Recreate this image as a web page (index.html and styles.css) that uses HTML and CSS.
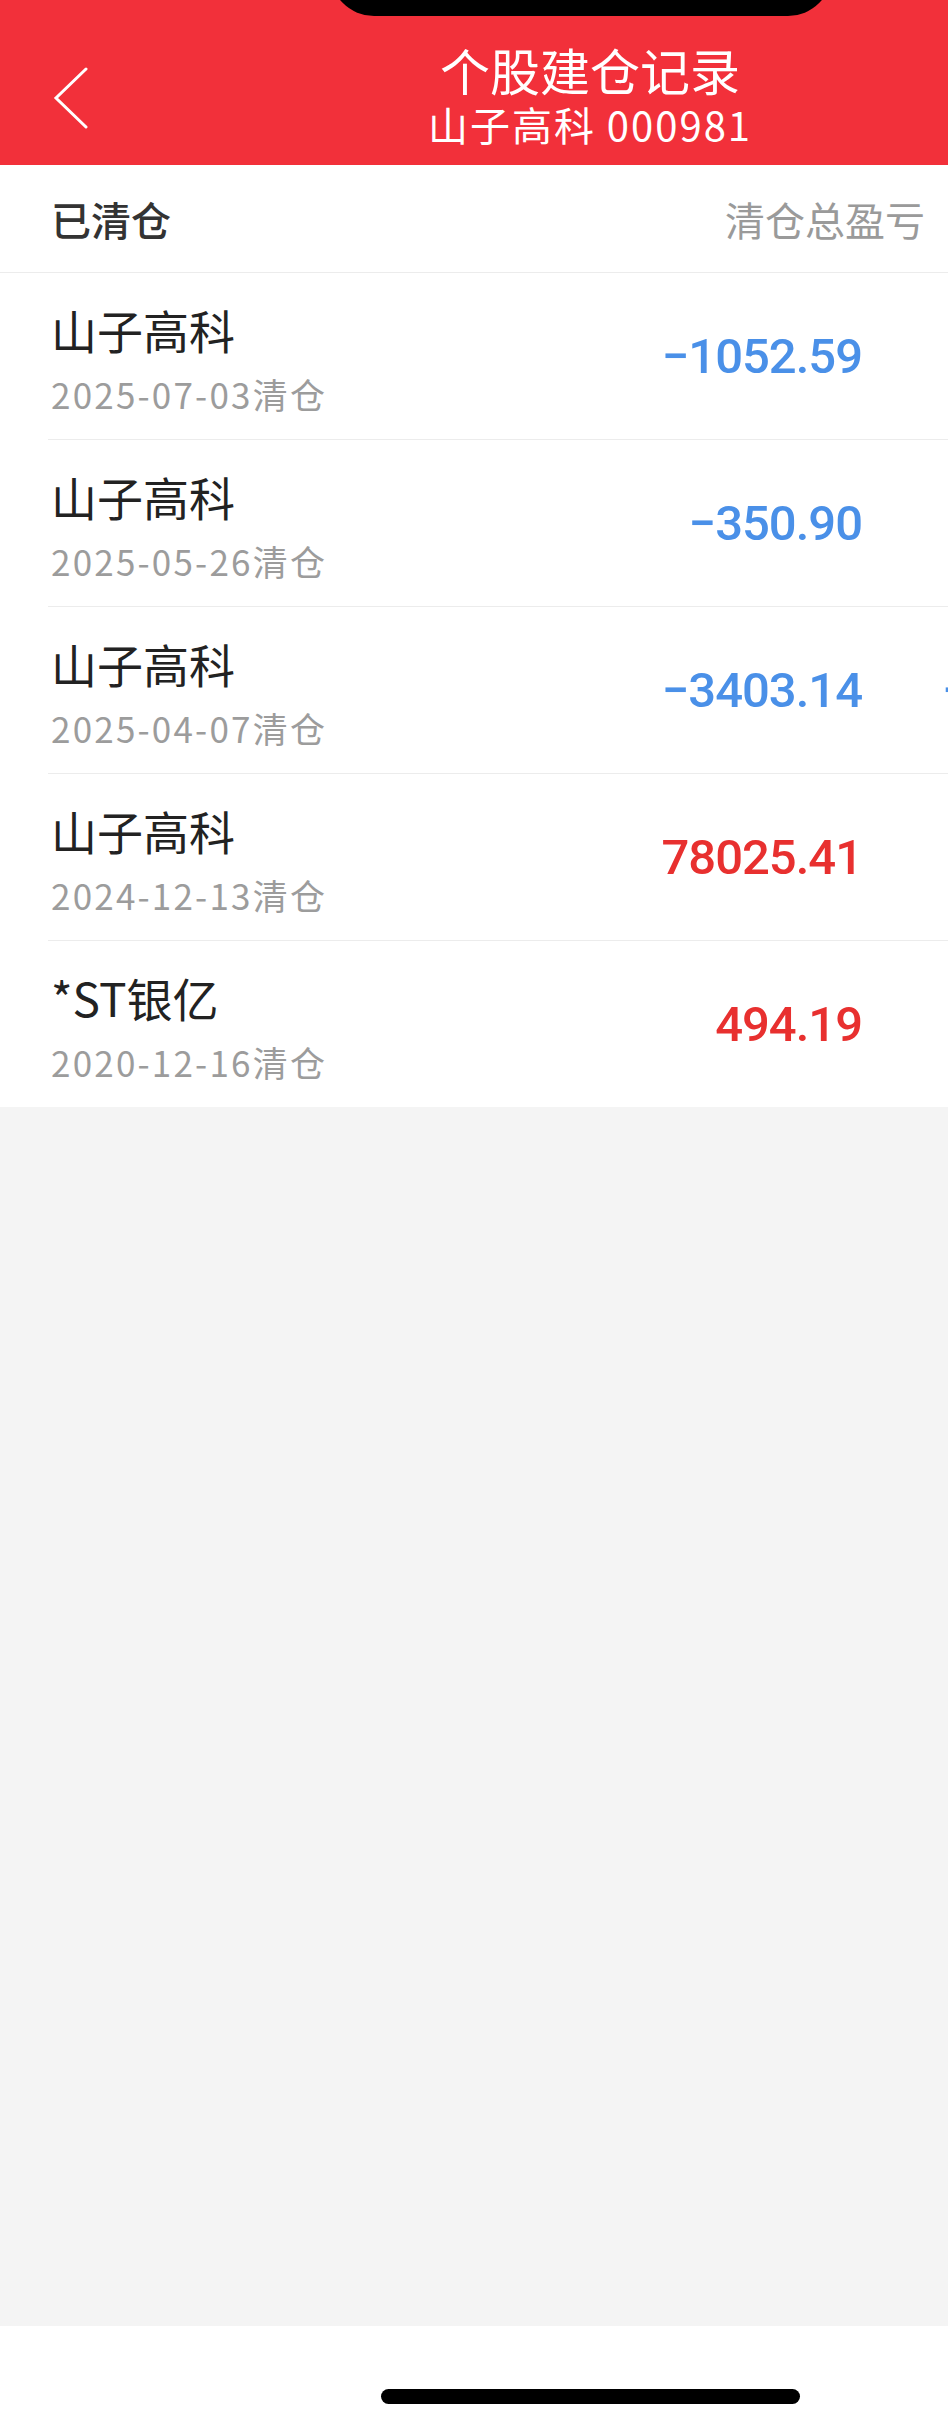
FILE: index.html
```html
<!DOCTYPE html>
<html lang="zh-CN">
<head>
<meta charset="UTF-8">
<meta name="viewport" content="width=device-width, initial-scale=1.0">
<title>个股建仓记录</title>
<link rel="stylesheet" href="styles.css">
</head>
<body>

<div class="app">
    <div class="notch"></div>

    <div class="topbar">
        <div class="back">
            <svg width="40" height="64" viewBox="0 0 40 64">
                <polyline points="35,4 5,33 35,62" fill="none" stroke="#fff" stroke-width="3" stroke-linecap="round" stroke-linejoin="miter"/>
            </svg>
        </div>
        <div class="titles">
            <div class="title">个股建仓记录</div>
            <div class="subtitle">山子高科 000981</div>
        </div>
        <div></div>
    </div>

    <div class="section">
        <div class="section-name">已清仓</div>
        <div class="section-col">清仓总盈亏</div>
    </div>

    <div class="list">
        <div class="row">
            <div class="info">
                <div class="name">山子高科</div>
                <div class="date">2025-07-03清仓</div>
            </div>
            <div class="value down">−1052.59</div>
            <div class="extra"></div>
        </div>
        <div class="row">
            <div class="info">
                <div class="name">山子高科</div>
                <div class="date">2025-05-26清仓</div>
            </div>
            <div class="value down">−350.90</div>
            <div class="extra"></div>
        </div>
        <div class="row">
            <div class="info">
                <div class="name">山子高科</div>
                <div class="date">2025-04-07清仓</div>
            </div>
            <div class="value down">−3403.14</div>
            <div class="extra down">−</div>
        </div>
        <div class="row">
            <div class="info">
                <div class="name">山子高科</div>
                <div class="date">2024-12-13清仓</div>
            </div>
            <div class="value up">78025.41</div>
            <div class="extra"></div>
        </div>
        <div class="row">
            <div class="info">
                <div class="name">*ST银亿</div>
                <div class="date">2020-12-16清仓</div>
            </div>
            <div class="value up">494.19</div>
            <div class="extra"></div>
        </div>
    </div>

    <div class="filler"></div>

    <div class="homebar">
        <div class="indicator"></div>
    </div>
</div>

</body>
</html>
```

FILE: styles.css
```css
body {
    margin: 0;
    overflow: hidden;
    background: #fff;
    font-family: "Noto Sans CJK SC", "Noto Sans", sans-serif;
}
.app {
    position: relative;
    width: 1180px;
    min-height: 2428px;
    display: flex;
    flex-direction: column;
}
.notch {
    position: absolute;
    top: -30px;
    left: 330px;
    width: 502px;
    height: 46px;
    background: #000;
    border-radius: 0 0 44px 44px;
}
.topbar {
    background: #f2303a;
    color: #fff;
    height: 165px;
    display: grid;
    grid-template-columns: 1fr auto 1fr;
}
.back {
    padding: 65px 0 0 51px;
}
.back svg {
    display: block;
}
.titles {
    padding-top: 38px;
    text-align: center;
}
.title {
    font-size: 50px;
    line-height: 62px;
}
.subtitle {
    font-size: 40px;
    line-height: 48px;
    letter-spacing: 2px;
}
.section {
    height: 108px;
    width: 948px;
    box-sizing: border-box;
    padding: 0 23px 0 51px;
    display: flex;
    align-items: center;
    justify-content: space-between;
    border-bottom: 1px solid #ececec;
}
.section-name {
    font-size: 40px;
    font-weight: 500;
    color: #333;
}
.section-col {
    font-size: 40px;
    color: #9a9a9a;
}
.list {
    background: #fff;
}
.row {
    margin-left: 48px;
    display: grid;
    grid-template-columns: 1fr 300px 318px;
    align-items: center;
    border-bottom: 1px solid #ececec;
}
.row:last-child {
    border-bottom: none;
}
.info {
    padding: 29px 0 23px 3px;
}
.name {
    font-size: 46px;
    line-height: 55px;
    color: #222;
}
.date {
    margin-top: 15px;
    font-size: 35px;
    line-height: 44px;
    letter-spacing: 2.2px;
    color: #9c9c9c;
}
.value {
    text-align: right;
    font-family: Roboto, "Noto Sans", sans-serif;
    font-weight: 500;
    font-size: 49px;
    letter-spacing: -1px;
}
.extra {
    padding-left: 80px;
    font-family: Roboto, "Noto Sans", sans-serif;
    font-weight: 500;
    font-size: 49px;
}
.down {
    color: #4a90e8;
}
.up {
    color: #e8302f;
}
.filler {
    flex: 1;
    background: #f4f4f4;
}
.homebar {
    height: 102px;
    display: flex;
    justify-content: center;
    padding-top: 63px;
    box-sizing: border-box;
}
.indicator {
    width: 419px;
    height: 15px;
    border-radius: 8px;
    background: #000;
}
```
